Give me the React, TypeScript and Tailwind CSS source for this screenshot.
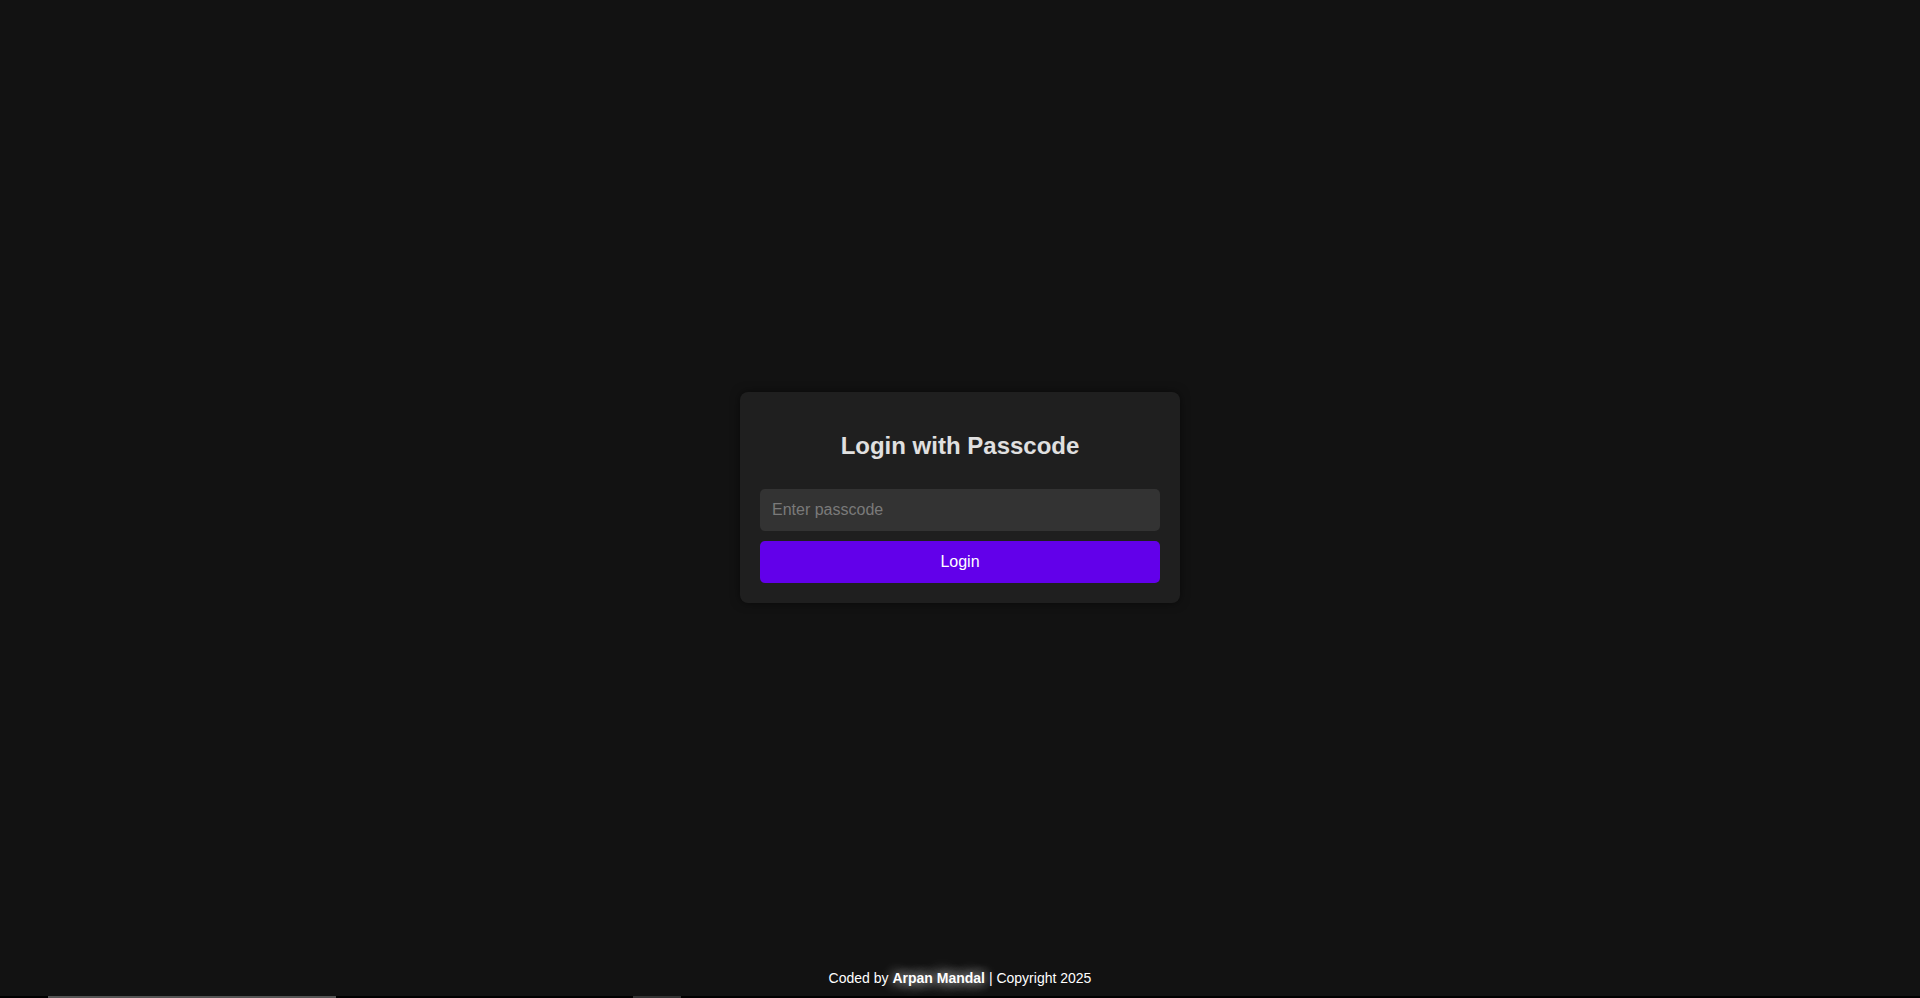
import { useState } from "react";

export default function App() {
    const [passcode, setPasscode] = useState("");

    return (
        <div className="flex h-[998px] flex-col bg-[#121212] font-['Liberation_Sans',Arial,sans-serif]">
            <main className="flex flex-1 items-center justify-center pt-[34px]">
                <div className="w-[440px] rounded-lg bg-[#1f1f1f] p-5 shadow-[0_0_10px_rgba(0,0,0,0.5)]">
                    <h2 className="mt-5 mb-[29px] text-center text-2xl leading-[28px] font-bold text-[#e0e0e0]">
                        Login with Passcode
                    </h2>
                    <input
                        type="password"
                        value={passcode}
                        onChange={(e) => setPasscode(e.target.value)}
                        placeholder="Enter passcode"
                        className="block h-[42px] w-full rounded-[5px] bg-[#333333] px-3 text-base text-white outline-none placeholder:text-[#7a7a7a]"
                    />
                    <button className="mt-[10px] block h-[42px] w-full rounded-[5px] bg-[#6200ea] text-base text-white">
                        Login
                    </button>
                </div>
            </main>
            <footer className="flex h-[36px] items-start justify-center pt-[10px] text-sm leading-4 text-white">
                <span>
                    Coded by{" "}
                    <b className="[text-shadow:0_0_12px_rgba(255,255,255,0.9),0_0_20px_rgba(255,255,255,0.4)]">
                        Arpan Mandal
                    </b>{" "}
                    | Copyright 2025
                </span>
            </footer>
            <div className="flex h-[2px] bg-black">
                <div className="ml-[48px] w-[288px] bg-[#555555]" />
                <div className="ml-[297px] w-[48px] bg-[#333333]" />
            </div>
        </div>
    );
}
